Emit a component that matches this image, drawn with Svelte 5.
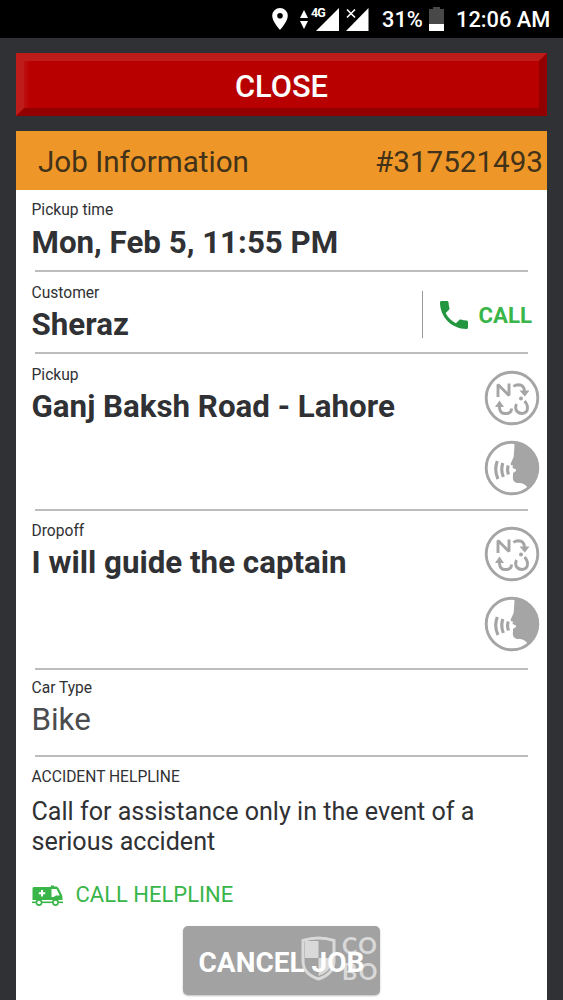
<script>
  // The job that is currently shown
  const job = {
    number: '#317521493',
    pickupTime: 'Mon, Feb 5, 11:55 PM',
    customer: 'Sheraz',
    pickup: 'Ganj Baksh Road - Lahore',
    dropoff: 'I will guide the captain',
    carType: 'Bike'
  };
</script>

<!-- Round translate and speak buttons, shared by both address rows -->
{#snippet addressActions()}
  <div class="actions">
    <button aria-label="Translate address">
      <svg width="56" height="56" viewBox="0 0 56 56" fill="none" stroke="#a5a5a5" stroke-width="2.9">
        <circle cx="28" cy="28" r="25.8" />
        <path d="M14 27V14.500L25 25.500V13.500" stroke-linejoin="bevel" />
        <path d="M29.500 16.500Q31.500 14.800 34.500 14.800Q40 15 40.500 21" />
        <path d="M35.500 20.500H45.500L40.800 26.500Z" fill="#a5a5a5" stroke="none" />
        <path d="M15.500 36V38Q16 43.500 21 43.500H23Q27.500 43 27.500 38.500" />
        <path d="M11 37L15.500 30.500L20 37Z" fill="#a5a5a5" stroke="none" />
        <path d="M32.500 34Q31 37 32 40Q34 43.500 38 43.500Q43.500 43 43.500 38Q43.500 34 40.500 31" />
        <circle cx="37" cy="28.500" r="2" fill="#a5a5a5" stroke="none" />
      </svg>
    </button>
    <button aria-label="Play address">
      <svg width="56" height="56" viewBox="0 0 56 56" fill="none" stroke="#a5a5a5">
        <path d="M30 2C31 6 30 9 30 13Q30 17 28.500 19.500L26.500 24Q26.500 25.500 29 25.500L28.500 28L32 29.500V31L29 33V35.500C28 41 31 43.500 36 43Q41 43.500 44 48Q53.500 40 53.800 28C53.800 13 43 2 30 2Z" fill="#a5a5a5" stroke="none" />
        <circle cx="28" cy="28" r="25.8" stroke-width="2.900" />
        <path d="M24.300 25.500Q22.700 29.500 24.500 34.500M18.800 23Q16.500 30 19.300 37M13.300 21Q9.800 30 14 39" stroke-width="3.200" />
      </svg>
    </button>
  </div>
{/snippet}

<div class="screen">
  <!-- Phone status bar -->
  <div class="status-bar">
    <svg class="pin" width="16" height="22" viewBox="0 0 16 22">
      <path fill="#fff" fill-rule="evenodd" d="M8 0A7.8 7.8 0 0 0 .2 7.8C.2 13.5 8 22 8 22S15.800 13.5 15.800 7.800A7.800 7.800 0 0 0 8 0ZM8 5A2.800 2.800 0 1 1 8 10.600A2.800 2.800 0 0 1 8 5Z" />
    </svg>
    <svg class="arrows" width="8" height="19" viewBox="0 0 8 19" fill="#fff">
      <path d="M4 0L8 8H0ZM4 19L8 11H0Z" />
    </svg>
    <div class="network">
      <span>4G</span>
      <svg width="23" height="23" viewBox="0 0 23 23"><path d="M23 0V23H0Z" fill="#fff" /></svg>
    </div>
    <svg class="no-sim" width="23" height="23" viewBox="0 0 23 23">
      <path d="M22.500 0V23H0Z" fill="#fff" />
      <path d="M1 1L9 9M9 1L1 9" stroke="#000" stroke-width="4" />
      <path d="M1 1.500L9 9.500M9 1.500L1 9.500" stroke="#fff" stroke-width="1.600" />
    </svg>
    <span class="percent">31%</span>
    <svg class="battery" width="15" height="24" viewBox="0 0 15 24">
      <path d="M4 0H11V2H15V24H0V2H4Z" fill="#484848" />
      <path d="M0 17H15V24H0Z" fill="#fff" />
    </svg>
    <span class="time">12:06 AM</span>
  </div>

  <div class="content">
    <button class="close">CLOSE</button>

    <div class="card">
      <div class="card-header">
        <span>Job Information</span>
        <span>{job.number}</span>
      </div>

      <div class="row time-row">
        <div class="label">Pickup time</div>
        <div class="value">{job.pickupTime}</div>
      </div>

      <div class="row customer-row">
        <div>
          <div class="label">Customer</div>
          <div class="value">{job.customer}</div>
        </div>
        <button class="call">
          <svg width="28" height="28" viewBox="3 3 18 18">
            <path fill="#23963f" d="M6.620 10.790c1.440 2.830 3.760 5.140 6.590 6.590l2.200-2.200c.27-.27.67-.36 1.020-.24 1.120.37 2.330.57 3.570.57.55 0 1 .45 1 1V20c0 .55-.45 1-1 1-9.390 0-17-7.610-17-17 0-.55.45-1 1-1h3.500c.55 0 1 .45 1 1 0 1.250.2 2.450.57 3.570.11.35.03.74-.25 1.020l-2.200 2.200z" />
          </svg>
          CALL
        </button>
      </div>

      <div class="row pickup-row">
        <div>
          <div class="label">Pickup</div>
          <div class="value">{job.pickup}</div>
        </div>
        {@render addressActions()}
      </div>

      <div class="row dropoff-row">
        <div>
          <div class="label">Dropoff</div>
          <div class="value">{job.dropoff}</div>
        </div>
        {@render addressActions()}
      </div>

      <div class="row car-row">
        <div class="label">Car Type</div>
        <div class="value light">{job.carType}</div>
      </div>

      <div class="helpline">
        <div class="label">ACCIDENT HELPLINE</div>
        <p>Call for assistance only in the event of a serious accident</p>
        <button class="call-helpline">
          <svg width="31" height="21" viewBox="0 0 31 21">
            <path fill="#39b54a" d="M2 2H18.500V1.500H19V.500H22V1.500H24.500Q26 2 27 4L30 10Q30.500 11 30.500 15H.500V3.500Q.500 2 2 2Z" />
            <path fill="#fff" d="M9 5H11V7.200H13.200V9.200H11V11.400H9V9.200H6.800V7.200H9ZM19.500 4H24.500L27.800 10.500H24L21.500 12H19.500Z" />
            <path stroke="#39b54a" stroke-width="1.600" d="M0 17.300H31" />
            <circle cx="7" cy="17.500" r="2.600" fill="#fff" stroke="#39b54a" stroke-width="1.600" />
            <circle cx="23.500" cy="17.500" r="2.600" fill="#fff" stroke="#39b54a" stroke-width="1.600" />
          </svg>
          CALL HELPLINE
        </button>
      </div>

      <div class="cancel-wrap">
        <button class="cancel">CANCEL JOB</button>
        <div class="watermark">
          <svg width="35" height="45" viewBox="0 0 35 45">
            <path d="M4 5H17.500V22H4ZM17.500 22H31V27Q29 36 17.500 40Z" fill="#fff" />
            <path d="M2 4.500Q17.500-.500 33 4.500V25Q33 38 17.500 43Q2 38 2 25Z" fill="none" stroke="#fff" stroke-width="3" />
          </svg>
          <div class="mark-text"><span>CO</span><span>BO</span></div>
        </div>
      </div>
    </div>
  </div>
</div>

<style>
  :global(body) {
    margin: 0;
    overflow: hidden;
  }

  .screen {
    height: 1000px;
    overflow: hidden;
    background: #303134;
    color: #303134;
    font-family: Roboto, "Noto Sans", sans-serif;
  }

  button {
    padding: 0;
    border: none;
    background: none;
    font-family: inherit;
    cursor: pointer;
  }

  svg {
    display: block;
    flex: none;
  }

  /* Status bar */
  .status-bar {
    box-sizing: border-box;
    display: flex;
    justify-content: flex-end;
    align-items: center;
    height: 38px;
    padding-right: 13px;
    background: #000;
    color: #fff;
    font-size: 21.8px;
    font-weight: 500;
    white-space: nowrap;
  }

  .pin {
    margin-right: 12px;
  }

  .arrows {
    margin-right: 4px;
  }

  .network {
    position: relative;
    margin-left: 4px;
    margin-right: 7px;
  }

  .network span {
    position: absolute;
    left: -5px;
    top: -2px;
    font-size: 12.5px;
    line-height: 13px;
    font-weight: 700;
    letter-spacing: -0.8px;
  }

  .no-sim {
    margin-right: 13px;
  }

  .percent {
    width: 41px;
    margin-right: 6px;
  }

  .battery {
    margin-right: 12px;
  }

  .time {
    width: 94px;
  }

  .content {
    padding: 15px 16px 0;
  }

  .close {
    display: block;
    box-sizing: border-box;
    width: 100%;
    height: 63px;
    padding-top: 4px;
    border: 8px solid;
    border-color: #bd1c1a #930000 #930000 #bd1c1a;
    background: linear-gradient(90deg, #bd1010, #b90000 6px);
    background-origin: padding-box;
    color: #fff;
    font-size: 30.8px;
    font-weight: 500;
  }

  .card {
    height: 869px;
    margin-top: 15px;
    background: #fff;
  }

  .card-header {
    box-sizing: border-box;
    display: flex;
    justify-content: space-between;
    align-items: center;
    height: 59px;
    padding: 3px 4px 0 22px;
    background: #ee9728;
    color: #413219;
    font-size: 29.6px;
  }

  /* Rows with a divider below */
  .row {
    position: relative;
    box-sizing: border-box;
    padding-left: 15.5px;
  }

  .row::after {
    content: "";
    position: absolute;
    left: 19px;
    right: 19px;
    bottom: 0;
    height: 2px;
    background: #bdbdbd;
  }

  .time-row {
    height: 82px;
    padding-top: 11px;
  }

  .customer-row,
  .pickup-row,
  .dropoff-row {
    display: flex;
    justify-content: space-between;
    align-items: flex-start;
  }

  .customer-row {
    height: 82px;
    padding-top: 12px;
  }

  .pickup-row {
    height: 157px;
    padding-top: 12px;
  }

  .dropoff-row {
    height: 159px;
    padding-top: 11px;
  }

  .car-row {
    height: 87px;
    padding-top: 9px;
  }

  .label {
    font-size: 15.6px;
    line-height: 18px;
  }

  .value {
    margin-top: 4px;
    font-size: 31.3px;
    line-height: 37px;
    font-weight: 700;
    white-space: nowrap;
  }

  .time-row .value {
    margin-top: 5px;
  }

  .value.light {
    font-weight: 400;
    color: #4b4c4e;
  }

  .call {
    display: flex;
    align-items: center;
    height: 47px;
    margin: 7px 15px 0 0;
    padding-left: 17px;
    border-left: 1px solid #999;
    color: #39b54a;
    font-size: 22.2px;
    font-weight: 700;
    gap: 11px;
  }

  .actions {
    display: flex;
    flex-direction: column;
    gap: 14px;
    margin: 4px 7px 0 0;
  }

  /* Helpline block */
  .helpline {
    padding: 11px 15px 0 15.5px;
  }

  .helpline p {
    margin: 11px 0 0;
    font-size: 25.1px;
    line-height: 30px;
  }

  .call-helpline {
    display: flex;
    align-items: center;
    gap: 13px;
    margin-top: 25px;
    color: #39b54a;
    font-size: 22px;
    line-height: 26px;
  }

  .cancel-wrap {
    position: relative;
    width: 197px;
    margin: 18px 0 0 167px;
  }

  .cancel {
    width: 197px;
    height: 69px;
    padding-top: 3px;
    border-radius: 5px;
    background: #a2a2a2;
    box-shadow: 0 1px 2px rgba(0, 0, 0, 0.25);
    color: #fff;
    font-size: 28px;
    font-weight: 700;
    white-space: nowrap;
  }

  /* Logo mark over the button */
  .watermark {
    position: absolute;
    left: 118px;
    top: 10px;
    display: flex;
    gap: 6px;
    opacity: 0.6;
  }

  .mark-text {
    display: flex;
    flex-direction: column;
    margin-top: -4px;
    color: #fff;
    font-family: Lato, sans-serif;
    font-size: 23px;
    font-weight: 700;
    line-height: 26px;
    letter-spacing: 1.5px;
  }
</style>
